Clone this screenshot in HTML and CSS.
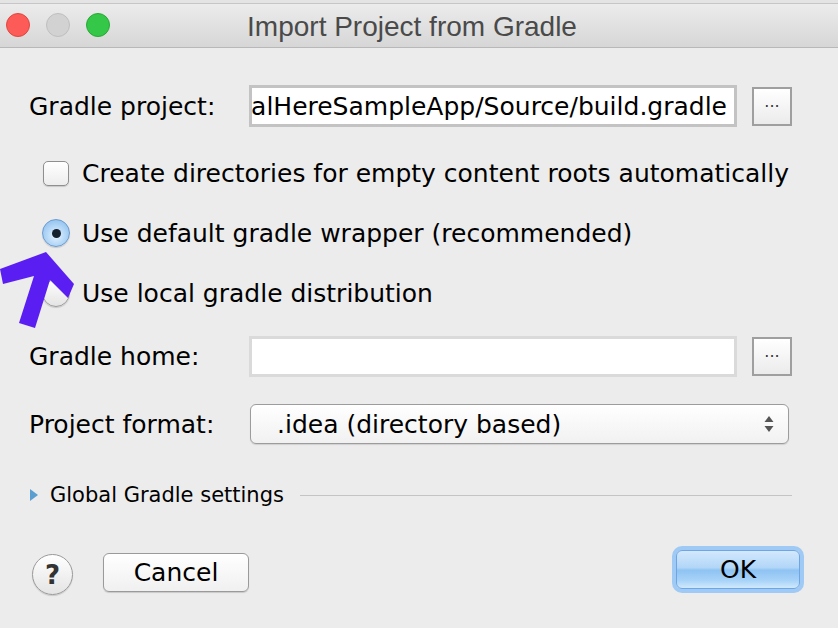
FILE: index.html
```html
<!DOCTYPE html>
<html>
<head>
<meta charset="utf-8">
<link rel="stylesheet" href="styles.css">
</head>
<body>
<div class="window">
  <div class="topstrip"></div>
  <div class="titlebar">
    <div class="lights">
      <span class="light red"></span>
      <span class="light gray"></span>
      <span class="light green"></span>
    </div>
    <div class="title">Import Project from Gradle</div>
  </div>
  <div class="content">
    <div class="row field-row r-project">
      <div class="label">Gradle project:</div>
      <div class="input active"><span class="path">alHereSampleApp/Source/build.gradle</span></div>
      <div class="browse">&middot;&middot;&middot;</div>
    </div>
    <div class="row check-row r-check">
      <span class="checkbox"></span>
      <span class="opt">Create directories for empty content roots automatically</span>
    </div>
    <div class="row check-row r-radio1">
      <span class="radio on"><span class="dot"></span></span>
      <span class="opt">Use default gradle wrapper (recommended)</span>
    </div>
    <div class="row check-row r-radio2">
      <span class="radio"></span>
      <span class="opt">Use local gradle distribution</span>
    </div>
    <div class="row field-row r-home">
      <div class="label">Gradle home:</div>
      <div class="input disabled"></div>
      <div class="browse">&middot;&middot;&middot;</div>
    </div>
    <div class="row field-row r-format">
      <div class="label">Project format:</div>
      <div class="select">
        <span class="sel-text">.idea (directory based)</span>
        <svg class="updown" width="10" height="18" viewBox="0 0 10 18"><path d="M5 1 L9.5 7 L0.5 7 Z" fill="#555"/><path d="M5 17 L9.5 11 L0.5 11 Z" fill="#555"/></svg>
      </div>
    </div>
    <div class="row section-row">
      <svg class="tri" width="8" height="12" viewBox="0 0 8 12"><path d="M0 0 L8 6 L0 12 Z" fill="#5a9fd0"/></svg>
      <span class="section-text">Global Gradle settings</span>
      <span class="rule"></span>
    </div>
    <div class="row buttons">
      <div class="help">?</div>
      <div class="btn cancel">Cancel</div>
      <div class="spacer"></div>
      <div class="btn ok">OK</div>
    </div>
  </div>
  <svg class="annot" width="80" height="80" viewBox="0 0 80 80">
    <polygon points="46,2 74,34 68,48 50,30 35,78 19,73 34,26 3,34 0,19" fill="#5b1ef2"/>
  </svg>
</div>
</body>
</html>
```

FILE: styles.css
```css
html, body {
  margin: 0;
  padding: 0;
}
body {
  width: 838px;
  height: 628px;
  overflow: hidden;
  background: #ececec;
  font-family: "DejaVu Sans", "Open Sans", sans-serif;
  color: #000;
}
.window {
  position: relative;
  width: 838px;
  height: 628px;
}
.topstrip {
  height: 3px;
  background: #e4e4e4;
}
.titlebar {
  position: relative;
  height: 43px;
  border-top: 1px solid #c6c6c6;
  border-bottom: 1px solid #b8b8b8;
  background: linear-gradient(#ececec, #d6d6d6);
  display: flex;
  align-items: center;
  justify-content: center;
}
.lights {
  position: absolute;
  left: 6px;
  top: 9px;
  display: flex;
  gap: 16px;
}
.light {
  width: 24px;
  height: 24px;
  border-radius: 50%;
  box-sizing: border-box;
}
.light.red { background: #fc5b57; border: 1px solid #e2463f; }
.light.gray { background: #d2d2d2; border: 1px solid #bfbfbf; }
.light.green { background: #34c748; border: 1px solid #27aa35; }
.title {
  font-family: "Liberation Sans", Arial, sans-serif;
  font-size: 28px;
  color: #4a4a4a;
  margin-right: 14px;
  padding-top: 2px;
}
.content {
  padding: 0 46px 0 29px;
}
.row {
  display: flex;
  align-items: center;
}
.label {
  width: 220px;
  font-size: 25px;
  flex: none;
}
.field-row .input {
  width: 488px;
  box-sizing: border-box;
  height: 42px;
  background: #fff;
  flex: none;
}
.input.active {
  border: 3px solid #c3c3c3;
  display: flex;
  justify-content: flex-end;
  align-items: center;
  overflow: hidden;
  white-space: nowrap;
  padding-right: 7px;
  font-size: 25px;
}
.path { flex: none; }
.input.disabled {
  border: 3px solid #dadada;
  height: 41px;
}
.browse {
  margin-left: 15px;
  width: 40px;
  height: 39px;
  box-sizing: border-box;
  border: 2px solid #9f9f9f;
  background: linear-gradient(#ffffff, #ebebeb);
  display: flex;
  align-items: center;
  justify-content: center;
  font-size: 16px;
  color: #333;
  flex: none;
}
.r-project { margin-top: 37px; height: 42px; }
.r-check { margin-top: 31px; }
.r-radio1 { margin-top: 30px; }
.r-radio2 { margin-top: 30px; }
.r-home { margin-top: 28px; height: 41px; }
.r-format { margin-top: 27px; height: 40px; }
.check-row {
  height: 30px;
  padding-left: 13px;
}
.opt {
  font-size: 25px;
  margin-left: 12px;
}
.checkbox {
  width: 26px;
  height: 25px;
  box-sizing: border-box;
  border: 1px solid #8f8f8f;
  border-radius: 5px;
  background: linear-gradient(#ffffff, #ededed);
  box-shadow: 0 1px 1px rgba(0,0,0,0.15);
  margin-left: 1px;
  margin-right: 1px;
}
.radio {
  width: 28px;
  height: 28px;
  box-sizing: border-box;
  border-radius: 50%;
  border: 1px solid #9a9a9a;
  background: linear-gradient(#ffffff, #e4e4e4);
  display: flex;
  align-items: center;
  justify-content: center;
  box-shadow: 0 1px 1px rgba(0,0,0,0.15);
}
.radio.on {
  border: 1px solid #6a9bd0;
  background: radial-gradient(circle at 50% 60%, #e6f3fe 0%, #b5d8f7 45%, #7fb6ea 100%);
}
.dot {
  width: 9px;
  height: 9px;
  border-radius: 50%;
  background: #14202e;
}
.select {
  width: 539px;
  height: 40px;
  box-sizing: border-box;
  margin-left: 1px;
  border: 1px solid #9c9c9c;
  border-radius: 6px;
  background: linear-gradient(#ffffff, #f1f1f1);
  box-shadow: 0 1px 1px rgba(0,0,0,0.12);
  display: flex;
  align-items: center;
  padding-left: 26px;
  padding-right: 14px;
  font-size: 25px;
}
.sel-text { flex: 1; }
.section-row {
  margin-top: 41px;
  height: 20px;
  padding-left: 1px;
}
.tri { flex: none; }
.section-text {
  font-size: 21px;
  margin-left: 12px;
}
.rule {
  flex: 1;
  height: 1px;
  background: #c4c4c4;
  margin-left: 16px;
  margin-top: 1px;
}
.buttons {
  margin-top: 41px;
  align-items: flex-start;
  height: 52px;
}
.help {
  width: 41px;
  height: 41px;
  box-sizing: border-box;
  border-radius: 50%;
  border: 1px solid #9a9a9a;
  background: linear-gradient(#ffffff, #e4e4e4);
  box-shadow: 0 1px 1px rgba(0,0,0,0.15);
  display: flex;
  align-items: center;
  justify-content: center;
  font-size: 26px;
  font-weight: bold;
  color: #333;
  margin-left: 3px;
  margin-top: 8px;
}
.btn {
  height: 39px;
  box-sizing: border-box;
  border-radius: 6px;
  display: flex;
  align-items: center;
  justify-content: center;
  font-size: 25px;
}
.cancel {
  width: 146px;
  margin-left: 30px;
  margin-top: 7px;
  border: 1px solid #9a9a9a;
  background: linear-gradient(#ffffff, #f0f0f0);
  box-shadow: 0 1px 1px rgba(0,0,0,0.15);
}
.spacer { flex: 1; }
.ok {
  width: 124px;
  margin-right: -8px;
  margin-top: 4px;
  border: 1px solid #6ea5e2;
  background: linear-gradient(#d3e8fc 0%, #b2d6f8 45%, #8fc3f3 52%, #a9d3f8 80%, #cfe9fd 100%);
  box-shadow: 0 0 0 4px #9fcaf5;
}
.annot {
  position: absolute;
  left: 0;
  top: 250px;
}
```
